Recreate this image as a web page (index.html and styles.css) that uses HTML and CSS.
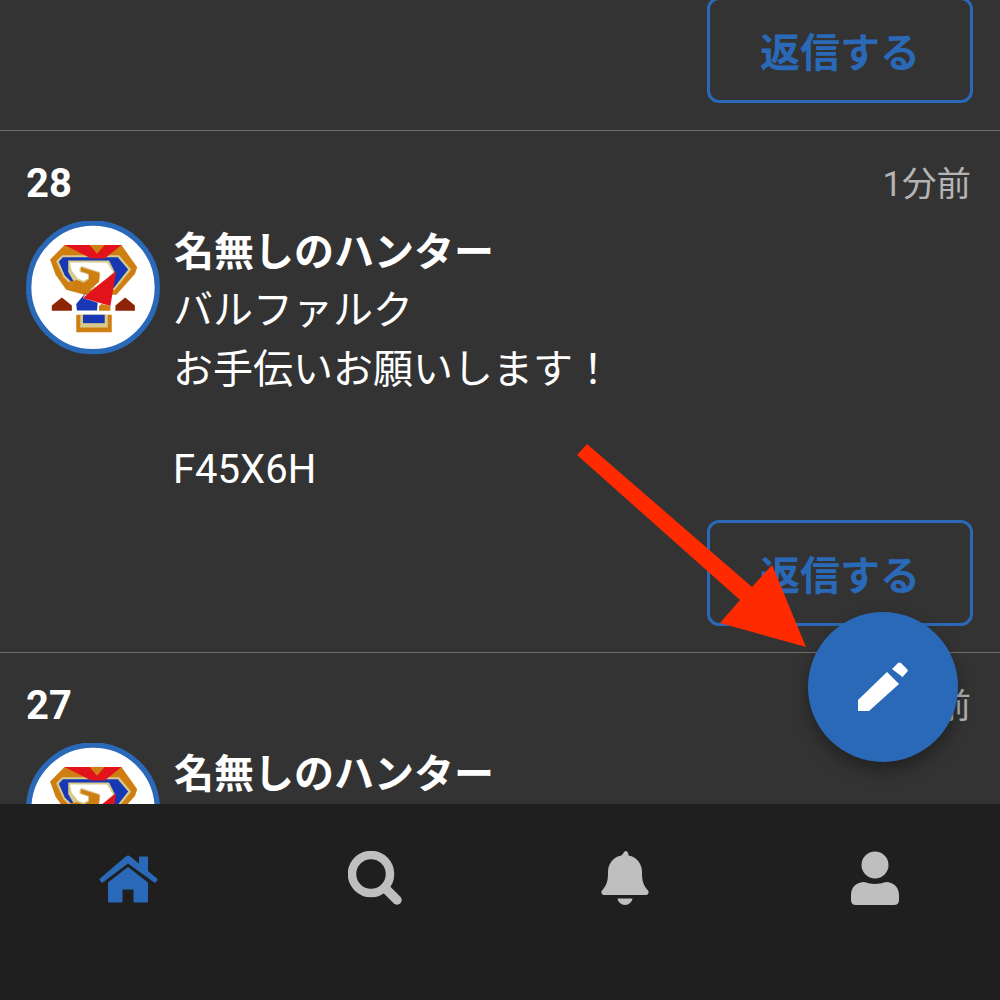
FILE: index.html
```html
<!DOCTYPE html>
<html lang="ja">
<head>
<meta charset="utf-8">
<title>掲示板</title>
<link rel="stylesheet" href="styles.css">
</head>
<body>
<svg class="defs" width="0" height="0" aria-hidden="true">
  <symbol id="logo" viewBox="20 20 400 400">
    <circle cx="220" cy="218" r="192" fill="#fff" stroke="#2a69b8" stroke-width="16"/>
    <path d="M135 92H305L352 158 345 178 290 240H195L140 225 108 180 92 135Z" fill="#cf7f12"/>
    <path d="M128 122 110 140 132 188 158 214 200 220 285 226 334 165 298 122Z" fill="#d8c98c"/>
    <path d="M130 128 118 142 136 183 162 208 200 212 282 220 325 165 294 128Z" fill="#1737b5"/>
    <path d="M146 138H268L285 172 240 225H195L165 205 146 172Z" fill="#d8c98c"/>
    <path d="M151 144H262L280 172 232 222 224 215 240 192 240 172 186 154 180 160 180 172 205 180 205 192 192 198 175 192 156 168Z" fill="#fff"/>
    <path d="M184 158 240 175 238 202 202 232H178L146 202 172 196 192 204 208 194 208 178 184 170Z" fill="#cf7f12"/>
    <path d="M135 92H210L232 118 255 92H305L255 132H215Z" fill="#e3131c"/>
    <path d="M200 232 170 268 172 287H232L234 264 190 250Z" fill="#1737b5"/>
    <path d="M289 170 272 274 190 250 235 212Z" fill="#e3131c"/>
    <path d="M97 288V272L127 248 157 272V288Z" fill="#8e2406"/>
    <path d="M287 288V272L316 248 345 272V288Z" fill="#8e2406"/>
    <path d="M238 288V274L246 268 272 274V288Z" fill="#cf7f12"/>
    <path d="M170 300H276V352H170Z" fill="#cf7f12"/>
    <path d="M182 300H264V338H182Z" fill="#d8c98c"/>
    <path d="M190 300H255V325H190Z" fill="#1737b5"/>
  </symbol>
</svg>

<div class="app">
  <main class="timeline">
    <div class="post post-tail">
      <div class="actions"><button class="reply">返信する</button></div>
    </div>
    <article class="post">
      <header class="post-head"><span class="num">28</span><time class="ago">1分前</time></header>
      <div class="post-body">
        <svg class="avatar"><use href="#logo"/></svg>
        <div class="content">
          <div class="name">名無しのハンター</div>
          <p class="text">バルファルク<br>お手伝いお願いします！</p>
          <p class="text code">F45X6H</p>
        </div>
      </div>
      <div class="actions"><button class="reply">返信する</button></div>
    </article>
    <article class="post">
      <header class="post-head"><span class="num">27</span><time class="ago">1分前</time></header>
      <div class="post-body">
        <svg class="avatar"><use href="#logo"/></svg>
        <div class="content">
          <div class="name">名無しのハンター</div>
        </div>
      </div>
    </article>
  </main>

  <nav class="tabbar">
    <div class="tab active">
      <svg class="tab-icon home" viewBox="0 0 60 48"><path fill="currentColor" d="M30 0.500q1 0 2 .8L41 8.500V2.500q0-1 1-1h7q1 0 1 1V16l9 7.500q1 .9.2 1.900l-1.500 1.800q-.8.9-1.800.1L30 8.500 5.100 27.300q-1 .8-1.800-.1L1.800 25.400q-.8-1 .2-1.900L28 1.300q1-.8 2-.8Z"/><path fill="currentColor" d="M30 12l20 15.500V46q0 1.500-1.500 1.500H37q-1.500 0-1.500-1.500V35q0-.5-.5-.5H25q-.5 0-.5.5v11q0 1.500-1.500 1.500H11.500Q10 47.500 10 46V27.500Z"/></svg>
    </div>
    <div class="tab">
      <svg class="tab-icon search" viewBox="0 0 54 54"><circle cx="23" cy="23" r="19" fill="none" stroke="currentColor" stroke-width="8.500"/><path d="M37 37L49 49" stroke="currentColor" stroke-width="9.500" stroke-linecap="round"/></svg>
    </div>
    <div class="tab">
      <svg class="tab-icon bell" viewBox="0 0 48 54"><path fill="currentColor" d="M24 0q3.500 0 3.500 4.500C36 6 41 13 41 21c0 9 1 13 6 18.500q1.500 2-.5 4-.8.500-2 .5H3.500q-1.200 0-2-.5-2-2-.5-4C6 34 7 30 7 21 7 13 12 6 20.500 4.500 20.500 0 24 0Z"/><path fill="currentColor" d="M16.500 47.500h15C31 51 28 54 24 54s-7-3-7.500-6.500Z"/></svg>
    </div>
    <div class="tab">
      <svg class="tab-icon user" viewBox="0 0 48 54"><circle cx="24" cy="14" r="13.500" fill="currentColor"/><path fill="currentColor" d="M13 31q11 4 22 0c7 0 13 5 13 13v5q0 5-5 5H5q-5 0-5-5v-5c0-8 6-13 13-13Z"/></svg>
    </div>
  </nav>

  <button class="fab" aria-label="投稿">
    <svg class="fab-icon" viewBox="0 0 50 50"><path fill="#fff" d="M0 38L29 10 41 22 11 49H0Z"/><path fill="#fff" d="M34 7L40 1q1.500-1 3 0L49 7q1.500 1.500 0 3L44.500 15Z"/></svg>
  </button>

  <svg class="arrow" viewBox="0 0 1000 1000"><polygon fill="#ff2a00" points="587,444 752,587 772,565 806,647 720,623 740,600 577,455"/></svg>
</div>
</body>
</html>
```

FILE: styles.css
```css
* { box-sizing: border-box; }
html, body { margin: 0; padding: 0; }
body {
  background: #333;
  color: #fff;
  font-family: "Noto Sans CJK JP", Roboto, sans-serif;
}
.defs { position: absolute; }
.app {
  position: relative;
  width: 1000px;
  height: 1000px;
  overflow: hidden;
  display: flex;
  flex-direction: column;
}
.timeline {
  flex: none;
  height: 804px;
  overflow: hidden;
  background: #333;
}
.post {
  border-bottom: 1px solid #6e6e6e;
  padding: 26px 27px 26px 26px;
  height: 522px;
}
.post-tail {
  padding: 0 27px 0 0;
  margin-top: -3px;
  height: 134px;
}
.post:last-child { border-bottom: none; }
.post-head {
  display: flex;
  justify-content: space-between;
  align-items: center;
  height: 52px;
}
.num {
  font-family: Roboto, sans-serif;
  font-weight: 700;
  font-size: 40px;
}
.ago {
  font-family: Roboto, "Noto Sans CJK JP", sans-serif;
  font-size: 34.500px;
  color: #b4b4b4;
  position: relative;
  top: -2px;
  right: 2px;
}
.post-body {
  display: flex;
  gap: 14px;
  margin-top: 12px;
}
.avatar {
  flex: none;
  width: 134px;
  height: 134px;
}
.name {
  font-weight: 700;
  font-size: 40px;
  line-height: 59.500px;
  margin-top: -1px;
  height: 60.500px;
}
.text {
  margin: 0;
  font-family: Roboto, "Noto Sans CJK JP", sans-serif;
  font-size: 40px;
  line-height: 59.500px;
  font-weight: 400;
  margin-left: -1px;
}
.code { margin-top: 40px; }
.actions {
  display: flex;
  justify-content: flex-end;
}
.post > .actions { margin-top: 21px; }
.post-tail > .actions { margin: 0; }
.reply {
  width: 266px;
  height: 106px;
  background: transparent;
  border: 3px solid #2a69b8;
  border-radius: 12px;
  color: #2a69b8;
  font-family: "Noto Sans CJK JP", sans-serif;
  font-weight: 700;
  font-size: 40px;
  padding: 0;
}
.tabbar {
  flex: 1;
  background: #1f1f1f;
  display: grid;
  grid-template-columns: repeat(4, 1fr);
  align-items: start;
  padding-top: 47px;
}
.tab {
  display: flex;
  justify-content: center;
  color: #bfbfbf;
}
.tab.active { color: #2a69b8; }
.tab-icon { display: block; height: 54px; width: 54px; }
.home { width: 60px; height: 48px; margin: 4px 0 0 6px; }
.bell { width: 48px; height: 54px; }
.user { width: 48px; height: 54px; }
.fab {
  position: absolute;
  left: 808px;
  top: 612px;
  width: 150px;
  height: 150px;
  border: none;
  border-radius: 50%;
  background: #2a69b8;
  box-shadow: 0 8px 16px rgba(0, 0, 0, .35);
  display: flex;
  align-items: center;
  justify-content: center;
  padding: 0;
}
.fab-icon { width: 50px; height: 50px; }
.arrow {
  position: absolute;
  inset: 0;
  width: 1000px;
  height: 1000px;
  pointer-events: none;
}
```
